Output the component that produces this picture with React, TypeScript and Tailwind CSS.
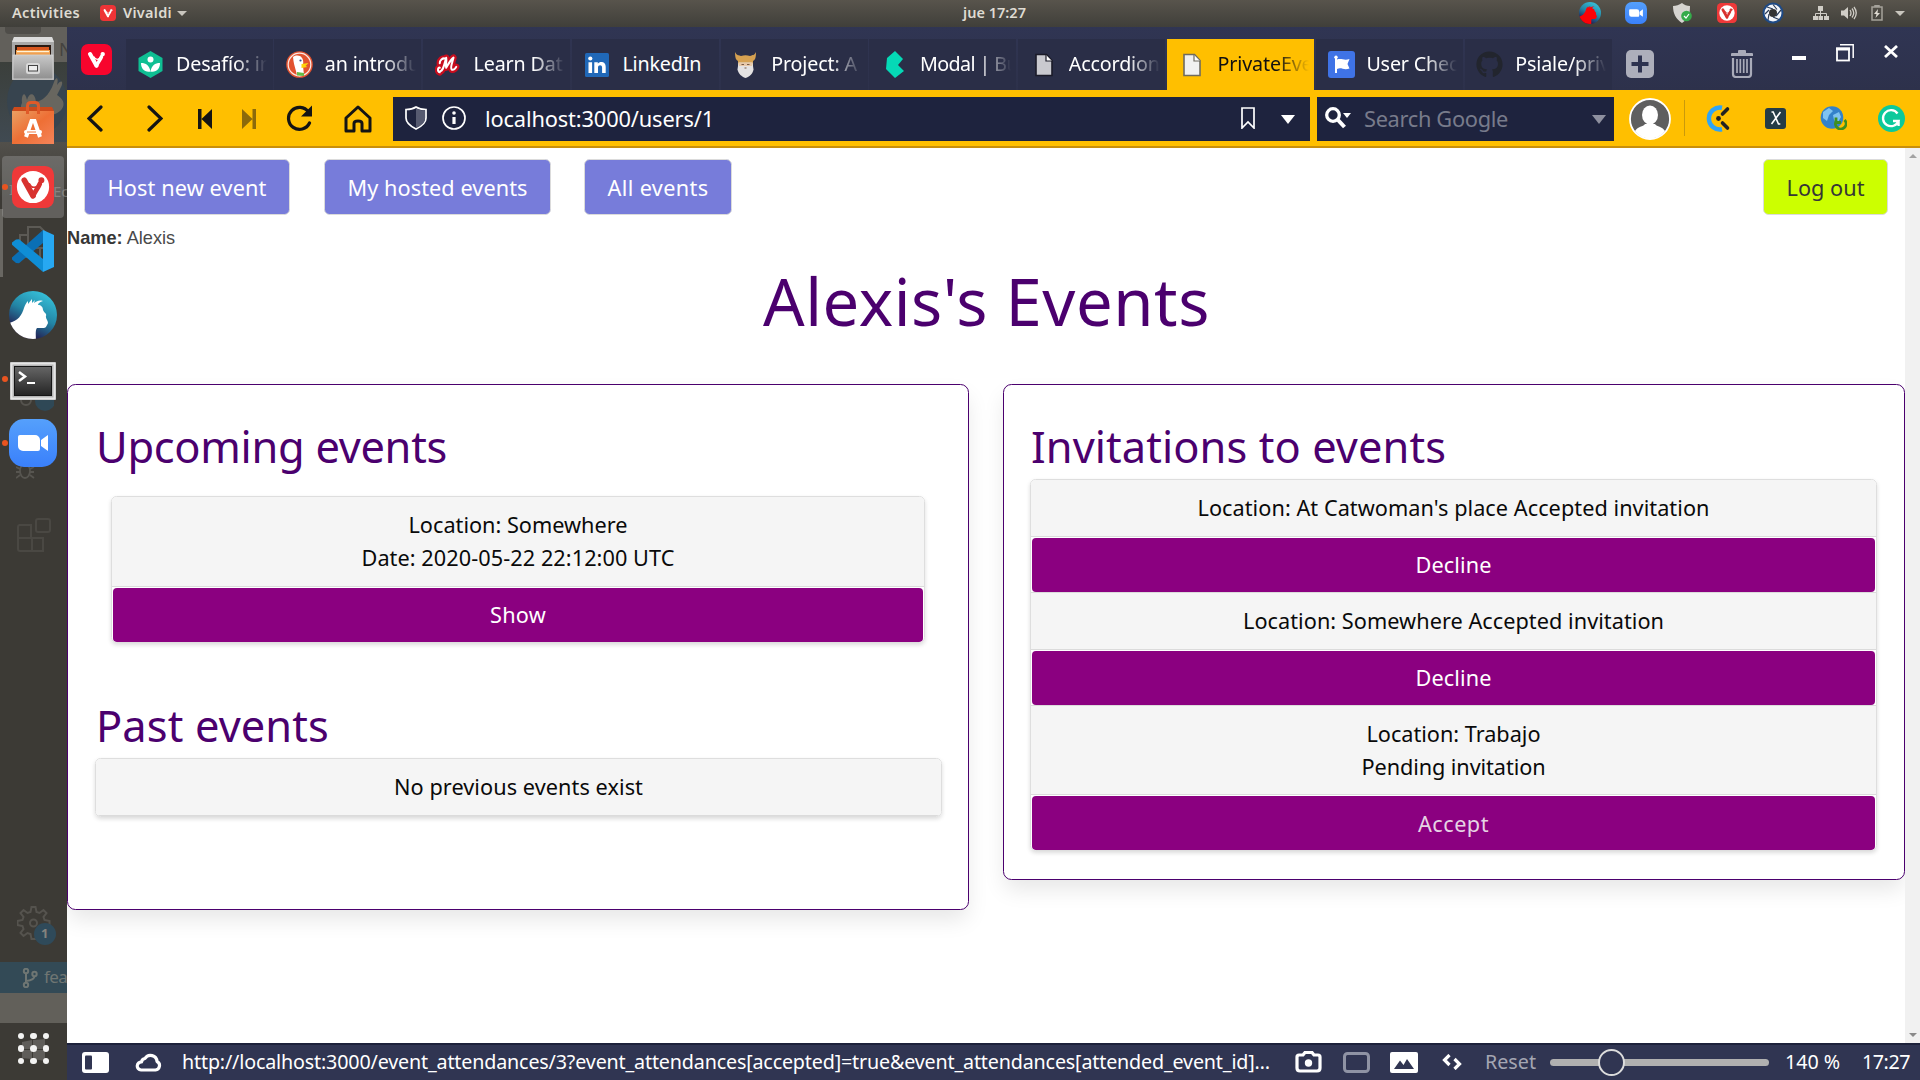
import React, { useLayoutEffect, useRef, useState } from 'react';
import { FaGithub } from 'react-icons/fa';

/** Text that tracks itself in or out to fill a known width. */
function T({ w, children, className = '' }: { w: number; children: string; className?: string }) {
  const ref = useRef<HTMLSpanElement>(null);
  const [ls, setLs] = useState(0);
  useLayoutEffect(() => {
    if (ref.current) {
      const natural = ref.current.getBoundingClientRect().width;
      setLs((w - natural) / children.length);
    }
  }, [w, children]);
  return (
    <span ref={ref} className={`inline-block whitespace-pre ${className}`} style={{ letterSpacing: ls }}>
      {children}
    </span>
  );
}

type P = { className?: string };

const VMark = ({ fill = '#fff' }: { fill?: string }) => (
  <g fill="none" stroke={fill} strokeLinecap="round" strokeLinejoin="round">
    <path d="M7 7.800 L12 16.800" strokeWidth="3.200" />
    <path d="M12 16.800 C13.400 14 15.300 11.600 15.900 9.800" strokeWidth="2.700" />
    <circle cx="16.800" cy="7.800" r="1.200" fill={fill} strokeWidth="1" />
    <path d="M10 9.900 C11 12.400 13.800 12.600 15.600 10" strokeWidth=".9" />
  </g>
);
const Vivaldi = ({ className, color = '#f9163a' }: P & { color?: string }) => (
  <svg viewBox="0 0 24 24" className={className}>
    <rect width="24" height="24" rx="5.5" fill={color} />
    <VMark />
  </svg>
);
const VivaldiRound = ({ className }: P) => (
  <svg viewBox="0 0 24 24" className={className}>
    <rect width="24" height="24" rx="5" fill="#ef3939" />
    <circle cx="12" cy="12" r="9.2" fill="#fff" />
    <g transform="translate(0 .3)"><VMark fill="#d8322f" /></g>
  </svg>
);
const Zoom = ({ className }: P) => (
  <svg viewBox="0 0 48 48" className={className}>
    <defs>
      <linearGradient id="zm" x1="0" y1="0" x2="0" y2="1"><stop stopColor="#55a0fc" /><stop offset="1" stopColor="#3a80fb" /></linearGradient>
    </defs>
    <rect width="48" height="48" rx="15" fill="url(#zm)" />
    <path d="M9 18a2 2 0 0 1 2-2h15a5 5 0 0 1 5 5v9a2 2 0 0 1-2 2H14a5 5 0 0 1-5-5zM32 21l7-5v16l-7-5z" fill="#fff" />
  </svg>
);
const Files = () => (
  <svg viewBox="0 0 42 43" className="h-[43px] w-[42px]">
    <defs>
      <linearGradient id="fl" x1="0" y1="0" x2="0" y2="1"><stop stopColor="#c9c9c9" /><stop offset="1" stopColor="#8f8f8f" /></linearGradient>
    </defs>
    <path d="M2 0h38l2 5v38H0V5z" fill="#a9a9a9" />
    <path d="M2 0h38l2 5H0z" fill="#dcdcdc" />
    <rect x="3" y="8" width="36" height="10" fill="#2a1a12" />
    <rect x="5" y="10" width="32" height="3" fill="#d8571f" />
    <rect x="4" y="13" width="34" height="5" fill="#f0a050" />
    <rect x="5" y="14" width="32" height="1.2" fill="#fff3d8" />
    <rect x="1" y="18" width="40" height="24" fill="url(#fl)" stroke="#d2d2d2" strokeWidth=".8" />
    <rect x="14" y="26" width="14" height="11" rx="2.5" fill="#d9d9d9" />
    <rect x="16.500" y="28.500" width="9" height="5.500" fill="#eee" stroke="#444" />
  </svg>
);
const Software = () => (
  <svg viewBox="0 0 42 43" className="h-[43px] w-[42px]">
    <defs>
      <linearGradient id="sw" x1="0" y1="0" x2="1" y2="1"><stop stopColor="#e9a063" /><stop offset=".5" stopColor="#ee6f35" /><stop offset="1" stopColor="#f5845a" /></linearGradient>
    </defs>
    <path d="M2 6h38l2 4v33H0V10z" fill="#cc4a1b" />
    <path d="M0 10h42v33H0z" fill="url(#sw)" />
    <path d="M15.500 13V5q0-3.500 3.500-3.500h4q3.500 0 3.500 3.500v8" fill="none" stroke="#e05a28" strokeWidth="3" />
    <path d="M14 36l5.500-16h3L28 36" fill="none" stroke="#fff" strokeWidth="4" />
    <rect x="12" y="29" width="18" height="4" rx="2" fill="#fff" />
    <path d="M15 31h9" stroke="#ee7a45" />
  </svg>
);
const Code = () => (
  <svg viewBox="0 0 42 42" className="size-[42px]">
    <path d="M31 0L0 27.500v2L4 33l3 .2L31 13z" fill="#0a6fb5" />
    <path d="M0 12.500L4 9.500l3-.2L31 29v13L0 14.700z" fill="#0f8ed6" />
    <path d="M31 0l11 5v32l-11 5z" fill="#27a8f2" />
  </svg>
);
const Rambox = ({ className, body = '#fff' }: P & { body?: string }) => (
  <svg viewBox="0 0 48 48" className={className}>
    <defs>
      <linearGradient id="rb" x1=".8" y1="0" x2=".3" y2="1"><stop stopColor="#38c6de" /><stop offset=".5" stopColor="#2385a5" /><stop offset="1" stopColor="#23033c" /></linearGradient>
      <clipPath id="rc"><circle cx="24" cy="24" r="24" /></clipPath>
    </defs>
    <circle cx="24" cy="24" r="24" fill="url(#rb)" />
    <path clipPath="url(#rc)" d="M0 32c9-2 13-8 15-15 1-3 2-5 4-7v3l4-5v4l3-3-1 3c3-2 5-3 9-2-3 1-5 2-5 4 3 0 5 2 5 5 1 3 4 3 3 6-1 3 4 6 1 9-1 2-1 3-4 3h-6c-2 2-1 9-1 14H0z" fill={body} />
  </svg>
);
const Terminal = () => (
  <svg viewBox="0 0 46 38" className="h-[38px] w-[46px]">
    <defs>
      <linearGradient id="tm" x1="0" y1="0" x2="0" y2="1"><stop stopColor="#666" /><stop offset="1" stopColor="#242424" /></linearGradient>
    </defs>
    <rect width="46" height="38" rx="1" fill="#b5b5b5" />
    <rect x="1.500" y="1.500" width="43" height="35" fill="none" stroke="#e6e6e6" strokeWidth="2" />
    <rect x="4.500" y="4.500" width="37" height="29" fill="url(#tm)" stroke="#151515" />
    <path d="M9 10l6 4.500-6 4.500" fill="none" stroke="#fff" strokeWidth="2.500" />
    <path d="M17 21h8" stroke="#fff" strokeWidth="2" />
  </svg>
);

/* ---------- tab favicons ---------- */
const Hex = () => (
  <svg viewBox="0 0 27 27" className="size-[27px]">
    <path d="M13.500 0L25.500 7v13l-12 7-12-7V7z" fill="#0fbf93" />
    <circle cx="13.500" cy="8.500" r="3" fill="#fff" />
    <path d="M13.500 20.500c-6 1-9.500-2.500-9.500-8.500 5 0 8.500 2.500 9.500 8.500zM13.500 20.500c6 1 9.500-2.500 9.500-8.500-5 0-8.500 2.500-9.500 8.500z" fill="#fff" />
  </svg>
);
const Duck = () => (
  <svg viewBox="0 0 27 27" className="size-[27px]">
    <circle cx="13.500" cy="13.500" r="13.300" fill="#e2522f" />
    <circle cx="13.500" cy="13.500" r="11.300" fill="none" stroke="#fbe9e4" strokeWidth="1.200" />
    <path d="M7 6c3-2 7-2 9 1 2 3 1 6 1 8l1 9q-4 2-7 .5C10 19 8 14 7.500 10z" fill="#fff" />
    <circle cx="14.500" cy="9.500" r="1.100" fill="#2d4f8e" />
    <path d="M15.500 13l7-1-3 3 2 1-6 1z" fill="#fdd20a" />
    <path d="M11 21l7 1v3l-7-.5z" fill="#65bc46" />
  </svg>
);
const Medal = () => (
  <svg viewBox="-2 -2 28 24" className="h-[22px] w-[26px]">
    <path d="M3 18C0 17 1 12 3 13M3 17c4 0 5-8 7-15 1 4-1 9 0 11 2-3 4-8 8-11-1 5-4 11-2 13 2 1 4-1 5-3M3 8c0-3 3-6 6-5" fill="none" stroke="#c80d1e" strokeWidth="7" strokeLinecap="round" strokeLinejoin="round" />
    <path d="M3 18C0 17 1 12 3 13M3 17c4 0 5-8 7-15 1 4-1 9 0 11 2-3 4-8 8-11-1 5-4 11-2 13 2 1 4-1 5-3M3 8c0-3 3-6 6-5" fill="none" stroke="#fff" strokeWidth="2.200" strokeLinecap="round" strokeLinejoin="round" />
  </svg>
);
const Linked = () => (
  <svg viewBox="0 0 24 24" className="size-6">
    <rect width="24" height="24" rx="1.500" fill="#2068b8" />
    <circle cx="5.300" cy="5.500" r="2.100" fill="#fff" />
    <path d="M3.500 9.200h3.600V20H3.500zM9.300 9.200h3.500v1.500c1.700-2.700 7.900-2.600 7.900 3V20h-3.600v-5.600c0-3-4.100-2.800-4.100 0V20H9.300z" fill="#fff" />
  </svg>
);
const Odin = () => (
  <svg viewBox="0 0 21 26" className="h-[26px] w-[21px]">
    <path d="M0 0c2 4 4 3 6 4 3-1 6-1 9 0 2-1 4 0 6-4 0 6-1 8-3 9v6H3V9C1 8 0 6 0 0z" fill="#d6a151" />
    <path d="M3.500 10.500h14l1 7c-1 5-4 7-8 8.500-4-1.500-7-4-8-8.500z" fill="#e4e2e2" />
    <path d="M4 11h13v3H4z" fill="#e8c8a8" />
    <path d="M6.500 12.500h2.500M12 12.500h2.500M9.500 16h2" stroke="#7a5b43" strokeWidth="1.200" />
  </svg>
);
const Bulma = () => (
  <svg viewBox="0 0 18 27" className="h-[27px] w-[18px]"><path d="M0 18L1 7l8-7 8 8-5 6 6 6-9 7z" fill="#05d9b6" /></svg>
);
const Doc = ({ light }: { light?: boolean }) => (
  <svg viewBox="0 0 20 24" className="h-6 w-5">
    <path d="M2 1.500h10.500l5.500 6v15H2z" fill={light ? '#f1f1f1' : '#c9c9cf'} stroke={light ? '#6f6b60' : '#1b1b28'} strokeWidth="1.600" />
    <path d="M12 2v6h6" fill="#fff" stroke={light ? '#6f6b60' : '#1b1b28'} strokeWidth="1.200" />
  </svg>
);
const Flag = () => (
  <svg viewBox="0 0 27 27" className="size-[27px]">
    <rect width="27" height="27" rx="3" fill="#3f73e6" />
    <circle cx="8" cy="6.300" r="1.700" fill="#fff" />
    <path d="M7 7h2v15H7zM9 8.500c5-1.500 7 1.500 12.500-.5l-2 5 2 4.500c-6 2-8-1.500-12.500.5z" fill="#fff" />
  </svg>
);

const tabs: { icon: React.ReactNode; label: string; active?: boolean; tight?: boolean }[] = [
  { icon: <Hex />, label: 'Desafío: in' },
  { icon: <Duck />, label: 'an introdu' },
  { icon: <Medal />, label: 'Learn Dat' },
  { icon: <Linked />, label: 'LinkedIn' },
  { icon: <Odin />, label: 'Project: A' },
  { icon: <Bulma />, label: 'Modal | Bu', tight: true },
  { icon: <Doc />, label: 'Accordion' },
  { icon: <Doc light />, label: 'PrivateEve', active: true },
  { icon: <Flag />, label: 'User Chec' },
  { icon: <FaGithub className="size-[27px] text-[#22252e]" />, label: 'Psiale/priv' },
];

function TopBar() {
  return (
    <header className="flex h-[27px] shrink-0 items-center bg-linear-to-b from-[#58544c] to-[#403f3a] text-[14.500px] font-semibold text-[#dfdbd2]">
      <div className="flex w-[963px] items-center pl-3">
        <T w={68} className="-mt-px">Activities</T>
        <Vivaldi className="-mt-px ml-5 size-4" color="#ee3436" />
        <T w={49} className="-mt-px ml-[7px]">Vivaldi</T>
        <svg viewBox="0 0 10 5" className="ml-[5px] h-[5px] w-2.5"><path d="M0 0h10L5 5z" fill="#c9c6be" /></svg>
      </div>
      <T w={63} className="-mt-px">jue 17:27</T>
      <div className="-mt-px ml-auto flex items-center pr-[15px]">
        <Rambox className="size-[22px]" body="#fb0207" />
        <Zoom className="ml-6 size-[22px]" />
        <svg viewBox="0 0 19 21" className="ml-[26px] h-[21px] w-[19px]">
          <path d="M9 0c2 2 5 3 8 3 0 9-2 13-8 17C3 16 0 11 0 3c3 0 6-1 9-3z" fill="#d6d4d0" />
          <circle cx="13.500" cy="13" r="5.300" fill="#35ab4a" />
          <path d="M11 13l2 2 3-4" fill="none" stroke="#fff" strokeWidth="1.200" />
        </svg>
        <VivaldiRound className="ml-[25px] size-5" />
        <svg viewBox="0 0 22 22" className="ml-[25px] size-[22px]">
          <circle cx="11" cy="11" r="10.500" fill="#1e4a86" />
          <circle cx="11" cy="11" r="8.500" fill="#f4f6fa" />
          <circle cx="11" cy="11" r="4" fill="#333" />
          <path d="M11 2.500l4 5M19 8l-5 6M17 17.500l-6-2.500M6 18l1-6M3 12l4-4M5 5l6 2" stroke="#2b3c58" strokeWidth="1.200" />
        </svg>
        <svg viewBox="0 0 16 16" className="ml-[29px] size-4" fill="#d0cdc6">
          <path d="M5 1h5v5H5zM0 11h5v4H0zM5.500 11h4.500v4H5.500zM11 11h5v4h-5z" />
          <path d="M7.500 6v5M2.500 11V8.500h11V11" fill="none" stroke="#d0cdc6" />
        </svg>
        <svg viewBox="0 0 16 14" className="ml-3 h-3.5 w-4" fill="#d0cdc6">
          <path d="M0 4.500h3L7 1v12L3 9.500H0z" />
          <path d="M9 4q2 3 0 6M11 2.500q3.500 4.500 0 9M13 1q4.500 6 0 12" fill="none" stroke="#d0cdc6" strokeWidth="1.300" />
        </svg>
        <svg viewBox="0 0 12 16" className="ml-[14px] h-4 w-3">
          <path d="M4 2V.8h4V2M1 2h10v13H1z" fill="none" stroke="#a5a29b" strokeWidth="1.500" />
          <path d="M7 4L3 9h2.500L4.500 13 9 8H6.500z" fill="#dfdbd2" />
        </svg>
        <svg viewBox="0 0 10 5" className="ml-3 h-[5px] w-2.5"><path d="M0 0h10L5 5z" fill="#c9c6be" /></svg>
      </div>
    </header>
  );
}

function Dock() {
  return (
    <aside className="relative flex w-[67px] shrink-0 flex-col items-center overflow-hidden bg-[#3c3a35] pt-[10px]">
      {/* windows that show through the translucent dock */}
      <div className="absolute inset-0">
        <div className="h-[35px] bg-[#62605b]"><div className="ml-[5px] h-[7px] w-9 rounded-b bg-[#4f4d49]" /></div>
        <div className="h-20 bg-linear-to-b from-[#3b3f3b] to-[#404a52]" />
        <div className="h-14 bg-linear-to-b from-[#52504b] to-[#3c3a35]" />
        <span className="absolute top-2 left-[59px] text-lg text-[#45433f]">N</span>
        <svg viewBox="0 0 67 80" className="absolute top-[40px] left-0 h-20 w-[67px]">
          <ellipse cx="37" cy="34" rx="30" ry="34" fill="#37444f" />
          <path d="M22 36c-1-9 3-13 5-3 2-8 8-8 9 2 5-1 13-5 18-20 2-6 5-5 3 3 4-6 7-4 4 2l-4 8c10 6 8 15-2 19-12 4-26 2-32-3-3-3-2-6-1-8z" fill="#68665f" />
        </svg>
        <span className="absolute top-[151px] left-[9px] text-[15px] text-[#73716c]">I</span>
        <span className="absolute top-[153px] left-[53px] text-[15px] text-[#73716c]">Ec</span>
        <div className="absolute top-[182px] left-0 h-[68px] w-[3px] bg-[#696762]" />
        <svg viewBox="0 0 36 36" className="absolute top-[198px] left-[18px] size-9" fill="none" stroke="#5c5a55" strokeWidth="2">
          <path d="M10 2h12l5 5v16H10zM10 10H2v22h20v-9" />
        </svg>
        <svg viewBox="0 0 34 18" className="absolute top-[368px] left-5 h-[18px] w-[34px]">
          <circle cx="25" cy="6" r="10" fill="#2f4856" /><circle cx="6" cy="5" r="5" fill="none" stroke="#55534e" strokeWidth="2" />
        </svg>
        <svg viewBox="0 0 20 18" className="absolute top-[435px] left-[16px] h-[18px] w-5" fill="none" stroke="#575550" strokeWidth="1.800">
          <ellipse cx="9" cy="9" rx="5" ry="7" /><path d="M0 5l4 2M0 16l4-3M18 5l-4 2M18 16l-4-3M0 10h4M14 10h4" />
        </svg>
        <svg viewBox="0 0 34 34" className="absolute top-[491px] left-[17px] size-[34px]" fill="none" stroke="#4a4843" strokeWidth="2">
          <path d="M2 7h12v13h12v13H3q-2 0-2-2V9q0-2 2-2M1 20h14v13" /><rect x="19" y="1" width="14" height="13" rx="2" />
        </svg>
        <svg viewBox="0 0 40 40" className="absolute top-[878px] left-[17px] size-10">
          <path d="M14.500 2h4l1 5 3 1 4-3 3 3-3 4 1 3 5 1v4l-5 1-1 3 3 4-3 3-4-3-3 1-1 5h-4l-1-5-3-1-4 3-3-3 3-4-1-3-5-1v-4l5-1 1-3-3-4 3-3 4 3 3-1z" fill="none" stroke="#55534e" strokeWidth="2" />
          <circle cx="16.500" cy="18" r="3.500" fill="none" stroke="#55534e" strokeWidth="2" />
          <circle cx="28" cy="29" r="11" fill="#2f4a5a" />
        </svg>
        <span className="absolute top-[897px] left-[41px] text-[13px] font-bold text-[#85837e]">1</span>
        <div className="absolute top-[935px] left-0 flex h-[31px] w-[67px] items-center bg-[#334a56]">
          <svg viewBox="0 0 16 20" className="ml-[22px] h-5 w-4 shrink-0" fill="none" stroke="#6f7673" strokeWidth="2">
            <circle cx="4" cy="3" r="2.200" /><circle cx="4" cy="17" r="2.200" /><circle cx="12.500" cy="6" r="2.200" /><path d="M4 5v10M12.500 8q0 4-8.500 5" />
          </svg>
          <span className="-mt-0.5 ml-1.5 text-[17px] tracking-[-0.6px] text-[#6f7673]">fea</span>
        </div>
        <div className="absolute top-[966px] left-0 h-[30px] w-[67px] bg-[#62605a]" />
        <svg viewBox="0 0 24 22" className="absolute top-[1012px] left-[22px] h-[22px] w-6" fill="#5f5d59">
          <path d="M0 3l10-2v9H0zM11 1l12-1v10H11zM0 11h10v9L0 19zM11 11h12v11l-12-2z" />
        </svg>
      </div>

      <div className="relative flex w-full flex-col items-center pr-px">
        <Files />
        <div className="mt-[21px]"><Software /></div>
        <div className="mt-3 ml-0.5 flex size-[62px] items-center justify-center self-start rounded bg-[#aaa]/35">
          <VivaldiRound className="size-[42px]" />
        </div>
        <div className="mt-3"><Code /></div>
        <Rambox className="mt-[19px] size-12" />
        <div className="mt-[23px]"><Terminal /></div>
        <Zoom className="mt-[19px] size-12" />
      </div>
      {/* running-application markers */}
      <i className="absolute top-[157px] left-0.5 size-[6px] rounded-full bg-[#e95420]" />
      <i className="absolute top-[349px] left-0.5 size-[6px] rounded-full bg-[#e95420]" />
      <i className="absolute top-[413px] left-0.5 size-[6px] rounded-full bg-[#e95420]" />
      <div className="relative mt-auto mb-[16px] grid grid-cols-3 gap-1.5">
        {Array.from({ length: 9 }, (_, i) => <i key={i} className="size-[6.500px] rounded-full bg-[#f3f3f2]" />)}
      </div>
    </aside>
  );
}

function TabBar() {
  return (
    <div className="flex h-[63px] shrink-0 bg-linear-to-b from-[#303553] to-[#2d314b]">
      <Vivaldi className="mt-[17px] ml-[13.500px] size-[31px] shrink-0" color="#f8052d" />
      <div className="mt-3 ml-[14px] flex gap-[1.800px]">
        {tabs.map((t) => (
          <div key={t.label} className={`flex h-[51px] w-[147px] items-center ${t.active ? 'bg-[#ffbf00] text-[#111]' : 'bg-[#2a2e47] text-white'}`}>
            <span className="flex w-[50.500px] shrink-0 justify-center">{t.icon}</span>
            <span className={`mb-0.5 w-[91px] overflow-hidden text-[19.700px] whitespace-nowrap ${t.tight ? 'tracking-[-0.6px]' : 'tracking-[-0.150px]'} ${t.label === 'LinkedIn' ? '' : 'mask-r-from-[65%] mask-r-to-100%'}`}>{t.label}</span>
          </div>
        ))}
      </div>
      <svg viewBox="0 0 28 28" className="mt-[23px] ml-[14px] size-7"><rect width="28" height="28" rx="5" fill="#adafbb" /><path d="M14 5.500v17M5.500 14h17" stroke="#2e3350" strokeWidth="4" /></svg>
      <svg viewBox="0 0 22 28" className="mt-[23px] ml-[77.500px] h-7 w-[22px]" fill="#a9abb9">
        <path d="M7 1q0-1 1-1h6q1 0 1 1v2h6q1 0 1 1v2H0V4q0-1 1-1h6z" />
        <path d="M2 8v16q0 3 3 3h12q3 0 3-3V8" fill="none" stroke="#a9abb9" strokeWidth="2.200" />
        <path d="M6 9v14M9.300 9v14M12.700 9v14M16 9v14" stroke="#a9abb9" strokeWidth="1.700" />
      </svg>
      <svg viewBox="0 0 14 4" className="mt-[29px] ml-[38.500px] h-1 w-3.5"><rect width="14" height="4" fill="#fff" /></svg>
      <svg viewBox="0 0 18 18" className="mt-[17px] ml-[30px] size-[18px]" fill="none" stroke="#fff">
        <path d="M4 .8h13.200V14" strokeWidth="1.500" /><rect x="1" y="4.500" width="12" height="12" strokeWidth="1.800" /><path d="M0 5h14" strokeWidth="3" />
      </svg>
      <svg viewBox="0 0 14 13" className="mt-[18px] ml-[30px] h-[13px] w-3.5"><path d="M1 1l12 11M13 1L1 12" stroke="#fff" strokeWidth="2.800" /></svg>
    </div>
  );
}

function AddressBar() {
  return (
    <div className="flex h-[58px] shrink-0 items-center border-b-2 border-[#c98f0c] bg-[#ffbf00]">
      <div className="flex w-[326px] shrink-0 items-center pt-px">
        <svg viewBox="0 0 16 27" className="ml-5 h-[27px] w-4" fill="none" stroke="#141414" strokeWidth="3.200" strokeLinecap="round"><path d="M14 2L2 13.500 14 25" /></svg>
        <svg viewBox="0 0 16 27" className="ml-11 h-[27px] w-4" fill="none" stroke="#141414" strokeWidth="3.200" strokeLinecap="round"><path d="M2 2l12 11.500L2 25" /></svg>
        <svg viewBox="0 0 14 20" className="ml-[35px] h-5 w-3.5" fill="#141414"><path d="M0 0h3.500v20H0zM14 0v20L3.500 10z" /></svg>
        <svg viewBox="0 0 14 20" className="ml-[30px] h-5 w-3.5" fill="#8b6a0b"><path d="M10.500 0H14v20h-3.500zM0 0v20l10.500-10z" /></svg>
        <svg viewBox="0 0 27 27" className="ml-[30px] size-[27px]"><path d="M22.500 7A11 11 0 1 0 23.500 18" fill="none" stroke="#141414" strokeWidth="3.200" strokeLinecap="round" /><path d="M26 .5V11.500H15z" fill="#141414" /></svg>
        <svg viewBox="0 0 28 28" className="ml-[31px] size-7" fill="none" stroke="#141414" strokeWidth="3" strokeLinejoin="round"><path d="M2 13v13h8v-7.500q0-2.500 4-2.500t4 2.500V26h8V13L14 2z" /></svg>
      </div>
      <div className="mt-0.5 flex h-11 w-[917px] shrink-0 items-center bg-[#1e233e] text-white">
        <svg viewBox="0 0 22 24" className="-mt-0.5 ml-3 h-6 w-[22px]"><path d="M11 1c3 2 6 2.500 10 2.500V12c0 5-4 8-10 11C5 20 1 17 1 12V3.500C5 3.500 8 3 11 1z" fill="none" stroke="#fff" strokeWidth="1.700" /><path d="M11 2c3 2 6 2.500 9 2.500V12c0 5-3 7-9 10z" fill="#565a70" /></svg>
        <svg viewBox="0 0 24 24" className="-mt-0.5 ml-[15px] size-6"><circle cx="12" cy="12" r="11" fill="none" stroke="#fff" strokeWidth="1.700" /><circle cx="12" cy="7" r="1.800" fill="#fff" /><path d="M12 11v7" stroke="#fff" strokeWidth="3.200" /></svg>
        <T w={229} className="ml-[19px] text-[21.800px]">localhost:3000/users/1</T>
        <svg viewBox="0 0 14 22" className="-mt-0.5 ml-auto h-[22px] w-3.5"><path d="M1 1h12v20l-6-6-6 6z" fill="none" stroke="#fff" strokeWidth="1.700" /></svg>
        <svg viewBox="0 0 14 9" className="mr-[15px] ml-[26px] h-[9px] w-3.5"><path d="M0 0h14L7 9z" fill="#fff" /></svg>
      </div>
      <div className="mt-0.5 ml-[7px] flex h-11 w-[297px] shrink-0 items-center bg-[#1e233e]">
        <svg viewBox="0 0 26 22" className="-mt-0.5 ml-2 h-[22px] w-[26px]"><circle cx="8" cy="8" r="6.300" fill="none" stroke="#fff" strokeWidth="3.300" /><path d="M13 13l6.500 7" stroke="#fff" strokeWidth="4" /><path d="M18 6h8l-4 5z" fill="#fff" /></svg>
        <T w={144} className="ml-[13px] text-[21.800px] text-[#787b8b]">Search Google</T>
        <svg viewBox="0 0 14 9" className="mr-2 ml-auto h-[9px] w-3.5"><path d="M0 0h14L7 9z" fill="#8e909f" /></svg>
      </div>
      <svg viewBox="0 0 42 42" className="mt-px ml-[15px] size-[42px] shrink-0">
        <circle cx="21" cy="21" r="20" fill="#5f5f5f" />
        <ellipse cx="21" cy="17" rx="8" ry="9.500" fill="#fff" />
        <path d="M6 33c3-5 8-4 10-7h10c2 3 7 2 10 7-7 10-23 10-30 0z" fill="#fff" />
        <circle cx="21" cy="21" r="20" fill="none" stroke="#fff" strokeWidth="1.800" />
      </svg>
      <div className="ml-[13px] h-9 w-px bg-[#c9990c]" />
      <svg viewBox="0 0 26 27" className="ml-5 h-[27px] w-[26px]"><path d="M17 2.700A11 11 0 1 0 17 24.300" fill="none" stroke="#2fa4f5" strokeWidth="4.500" /><circle cx="13.500" cy="13.500" r="2.400" fill="#222" /><path d="M17.500 9l5-5M17.500 18l5 5" stroke="#222" strokeWidth="3.600" strokeLinecap="round" /></svg>
      <div className="ml-[34px] flex size-[21px] items-center justify-center rounded-[3px] bg-[#253c46]"><svg viewBox="0 0 12 14" className="h-3.5 w-3"><path d="M1.500 1h1.700l5.300 12h1.800M10.500 1L1.500 13" fill="none" stroke="#fff" strokeWidth="1.600" /></svg></div>
      <svg viewBox="0 0 27 24" className="ml-[34px] h-6 w-[27px]"><circle cx="12" cy="11.500" r="11.300" fill="#3482ca" /><path d="M3 6l6-4 4 3-4 4-2 6-4-3zM13 9l6-3 2 5-4 7-3-4z" fill="#7fc3f0" /><path d="M24.500 14a5.300 5.300 0 1 1-8 .5M16 11.500v5h5" fill="none" stroke="#3f8f1f" strokeWidth="2.800" /></svg>
      <svg viewBox="0 0 27 27" className="ml-[31px] size-[27px]"><circle cx="13.500" cy="13.500" r="13.500" fill="#0cc99b" /><path d="M19.500 8.500A8 8 0 1 0 20.500 16H15M20.600 21v-5" fill="none" stroke="#fff" strokeWidth="2.300" /></svg>
    </div>
  );
}

function NavButton({ w, tw, children }: { w: string; tw: number; children: string }) {
  return (
    <button className={`flex h-[55.500px] items-center justify-center rounded-[5.600px] border border-[#dbdbdb] bg-[#777cda] pt-[3px] text-[21.700px] text-white ${w}`}>
      <T w={tw}>{children}</T>
    </button>
  );
}
function Row({ lines, pb = 'pb-3' }: { lines: [string, number][]; pb?: string }) {
  return (
    <div className={`flex flex-col items-center border-b border-[#dbdbdb] bg-[#f5f5f5] pt-[11px] text-[21.700px] leading-[33px] text-[#0a0a0a] ${pb}`}>
      {lines.map(([s, w]) => <T key={s} w={w}>{s}</T>)}
    </div>
  );
}
function Action({ w, children, dim }: { w: number; children: string; dim?: boolean }) {
  return (
    <div className="border-b border-[#dbdbdb] px-px pt-px last:border-b-0">
      <button className={`flex h-[54px] w-full items-center justify-center rounded-[4px] bg-[#8b0080] text-[21.700px] ${dim ? 'pt-[3px] text-[#e6d3e4]' : 'pt-0.5 text-white'}`}>
        <T w={w}>{children}</T>
      </button>
    </div>
  );
}
const box = 'overflow-hidden rounded-[5.600px] border border-[#dedede] shadow-[0_2px_4px_rgba(10,10,10,0.14)]';
const panel = 'rounded-[8.400px] border border-[#4b006e] bg-white pt-[28px] shadow-[0_11.200px_22.400px_-2.800px_rgba(10,10,10,0.1)]';
const h2 = 'h-[66px] pl-px text-[43.400px] leading-[68px] text-[#4b006e]';

function Page() {
  return (
    <div className="flex min-h-0 flex-1 bg-white">
      <main className="w-[1838px]">
        <nav className="flex pt-[11px] pr-[17px] pl-[17px]">
          <NavButton w="w-[206px]" tw={159}>Host new event</NavButton>
          <span className="w-[34px]" />
          <NavButton w="w-[227px]" tw={180}>My hosted events</NavButton>
          <span className="w-[33px]" />
          <NavButton w="w-[148px]" tw={101}>All events</NavButton>
          <button className="ml-auto flex h-[55.500px] w-[125px] items-center justify-center rounded-[5.600px] border border-[#dbdbdb] bg-[#ccff00] pt-[3px] text-[21.700px] text-[#363636]">
            <T w={78}>Log out</T>
          </button>
        </nav>
        <p className="mt-[10px] h-[27px] font-['Liberation_Sans'] text-[18.200px] leading-[27px] text-[#4a4a4a]"><strong className="text-[#363636]">Name:</strong> Alexis</p>
        <h1 className="mt-[9px] flex h-20 justify-center pl-px text-[65.200px] leading-[80px] text-[#4b006e]"><T w={447}>Alexis's Events</T></h1>
        <div className="mt-[43px] flex items-start justify-between">
          <section className={`h-[526px] w-[902px] pr-[26px] pl-[27px] ${panel}`}>
            <h2 className={h2}><T w={351}>Upcoming events</T></h2>
            <div className={`mt-[17px] mr-[17px] ml-4 ${box}`}>
              <Row lines={[['Location: Somewhere', 219], ['Date: 2020-05-22 22:12:00 UTC', 313]]} />
              <Action w={56}>Show</Action>
            </div>
            <h2 className={`mt-[49px] ${h2}`}><T w={233}>Past events</T></h2>
            <div className={box}><Row lines={[['No previous events exist', 249]]} /></div>
          </section>
          <section className={`h-[496px] w-[902px] pr-[27px] pl-[26px] ${panel}`}>
            <h2 className={h2}><T w={415}>Invitations to events</T></h2>
            <div className={box}>
              <Row lines={[["Location: At Catwoman's place Accepted invitation", 512]]} />
              <Action w={76}>Decline</Action>
              <Row lines={[['Location: Somewhere Accepted invitation', 421]]} />
              <Action w={76}>Decline</Action>
              <Row lines={[['Location: Trabajo', 174], ['Pending invitation', 184]]} pb="pb-[11px]" />
              <Action w={71} dim>Accept</Action>
            </div>
          </section>
        </div>
      </main>
      <div className="flex flex-1 flex-col items-center justify-between bg-[#f1f1f1] py-1.5">
        <svg viewBox="0 0 8 4" className="h-1 w-2"><path d="M0 4h8L4 0z" fill="#a3a3a3" /></svg>
        <svg viewBox="0 0 8 4" className="h-1 w-2"><path d="M0 0h8L4 4z" fill="#8a8a8a" /></svg>
      </div>
    </div>
  );
}

function StatusBar() {
  return (
    <footer className="flex h-[37px] shrink-0 items-center border-t-2 border-[#1d223b] bg-[#303552] text-[19.700px] text-white">
      <svg viewBox="0 0 27 21" className="ml-[15px] h-[21px] w-[27px]"><rect width="27" height="21" rx="3" fill="#fff" /><rect x="3" y="3.500" width="7" height="14" rx="1" fill="#303552" /></svg>
      <svg viewBox="0 0 27 19" className="ml-[26px] h-[19px] w-[27px]"><path d="M6 17h14.500a4.500 4.500 0 0 0 1.500-8.500A6.500 6.500 0 0 0 10 5.500 4 4 0 0 0 6.500 9 4 4 0 0 0 6 17z" fill="none" stroke="#fff" strokeWidth="3.200" strokeLinejoin="round" /></svg>
      <T w={1088} className="-mt-px ml-5">http://localhost:3000/event_attendances/3?event_attendances[accepted]=true&event_attendances[attended_event_id]…</T>
      <div className="ml-auto flex items-center pr-2.5">
        <svg viewBox="0 0 27 22" className="ml-px h-[22px] w-[27px]"><path d="M2 6q0-2 2-2h4l2-2.500h7L19 4h4q2 0 2 2v11q0 3-3 3H5q-3 0-3-3z" fill="none" stroke="#fff" strokeWidth="3.200" /><circle cx="13.500" cy="12" r="3.700" fill="#fff" /></svg>
        <svg viewBox="0 0 27 21" className="ml-[21px] h-[21px] w-[27px]"><rect x="1.500" y="1.500" width="24" height="18" rx="3" fill="none" stroke="#8f93a4" strokeWidth="3" /></svg>
        <svg viewBox="0 0 28 21" className="ml-5 h-[21px] w-7"><rect width="28" height="21" rx="2" fill="#fff" /><path d="M4 17l6-8.500 3.500 4.500L17 7l7 10z" fill="#303552" /></svg>
        <svg viewBox="0 0 20 16" className="ml-6 h-4 w-5" fill="none" stroke="#fff" strokeWidth="3.200"><path d="M7.500 1L2.500 6l5 5M12.500 5l5 5-5 5" /></svg>
        <T w={51} className="-mt-px ml-[23.500px] text-[#a4a6b2]">Reset</T>
        <div className="relative ml-[14px] h-[7px] w-[219px] rounded-full bg-[#b0b0b0]">
          <i className="absolute top-[-10px] left-12 size-[27px] rounded-full border-2 border-[#dcdcdc] bg-[#303552]" />
        </div>
        <T w={55} className="-mt-px ml-4">140 %</T>
        <T w={48} className="-mt-px ml-[22px]">17:27</T>
      </div>
    </footer>
  );
}

export default function App() {
  return (
    <div className="flex h-[1080px] w-[1920px] flex-col overflow-hidden font-['Noto_Sans',sans-serif]">
      <TopBar />
      <div className="flex min-h-0 flex-1">
        <Dock />
        <div className="flex min-w-0 flex-1 flex-col">
          <TabBar />
          <AddressBar />
          <Page />
          <StatusBar />
        </div>
      </div>
    </div>
  );
}
